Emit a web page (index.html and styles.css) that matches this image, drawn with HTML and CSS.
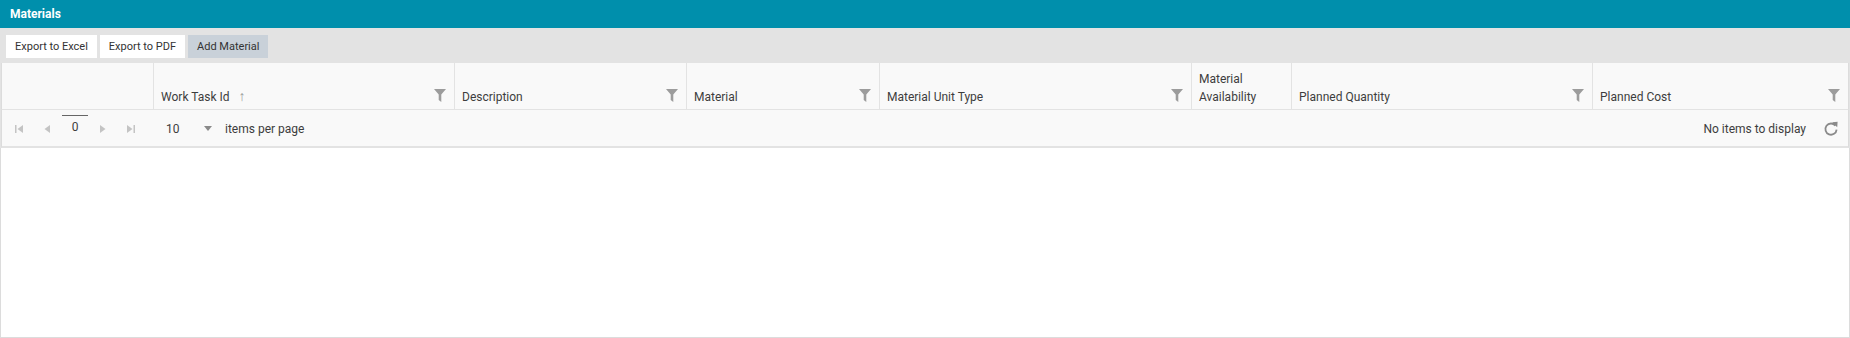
FILE: index.html
```html
<!DOCTYPE html>
<html lang="en">
<head>
  <meta charset="UTF-8">
  <meta name="viewport" content="width=device-width, initial-scale=1.0">
  <title>Materials</title>
  <link rel="stylesheet" href="styles.css">
</head>
<body>
  <div class="panel">
    <div class="panel-title">Materials</div>
    <div class="toolbar">
      <button type="button" class="btn">Export to Excel</button>
      <button type="button" class="btn">Export to PDF</button>
      <button type="button" class="btn btn-primary">Add Material</button>
    </div>
    <div class="grid">
      <div class="grid-header">
        <div class="th"></div>
        <div class="th">
          <span class="th-label">Work Task Id <span class="sort">&#8593;</span></span>
          <svg class="filter" viewBox="0 0 12 13"><path d="M0 0h12L7.3 5.6V13L4.7 11V5.6z"/></svg>
        </div>
        <div class="th">
          <span class="th-label">Description</span>
          <svg class="filter" viewBox="0 0 12 13"><path d="M0 0h12L7.3 5.6V13L4.7 11V5.6z"/></svg>
        </div>
        <div class="th">
          <span class="th-label">Material</span>
          <svg class="filter" viewBox="0 0 12 13"><path d="M0 0h12L7.3 5.6V13L4.7 11V5.6z"/></svg>
        </div>
        <div class="th">
          <span class="th-label">Material Unit Type</span>
          <svg class="filter" viewBox="0 0 12 13"><path d="M0 0h12L7.3 5.6V13L4.7 11V5.6z"/></svg>
        </div>
        <div class="th">
          <span class="th-label">Material Availability</span>
        </div>
        <div class="th">
          <span class="th-label">Planned Quantity</span>
          <svg class="filter" viewBox="0 0 12 13"><path d="M0 0h12L7.3 5.6V13L4.7 11V5.6z"/></svg>
        </div>
        <div class="th">
          <span class="th-label">Planned Cost</span>
          <svg class="filter" viewBox="0 0 12 13"><path d="M0 0h12L7.3 5.6V13L4.7 11V5.6z"/></svg>
        </div>
      </div>
      <div class="pager">
        <div class="pager-nav">
          <span class="pager-slot"><svg class="pager-icon" viewBox="0 0 8 8"><rect x="0" y="0" width="1.5" height="8"/><polygon points="8,0 8,8 2.5,4"/></svg></span>
          <span class="pager-slot"><svg class="pager-icon" viewBox="0 0 8 8"><polygon points="7,0 7,8 1.5,4"/></svg></span>
          <span class="pager-slot"><span class="page-current">0</span></span>
          <span class="pager-slot"><svg class="pager-icon" viewBox="0 0 8 8"><polygon points="1,0 1,8 6.5,4"/></svg></span>
          <span class="pager-slot"><svg class="pager-icon" viewBox="0 0 8 8"><polygon points="0,0 0,8 5.5,4"/><rect x="6.5" y="0" width="1.5" height="8"/></svg></span>
        </div>
        <div class="page-size">
          <span class="page-size-value">10</span>
          <svg class="caret" viewBox="0 0 8 5"><polygon points="0,0 8,0 4,5"/></svg>
          <span>items per page</span>
        </div>
        <div class="pager-info">No items to display</div>
        <svg class="refresh" viewBox="0 0 16 16"><path d="M12.4 4.6A5.6 5.6 0 1 0 13.6 8.6" fill="none" stroke="#8a8a8a" stroke-width="1.8"/><polygon points="9.2,1.2 14.6,0.8 14.2,6.2" fill="#8a8a8a"/></svg>
      </div>
      <div class="grid-content"></div>
    </div>
  </div>
</body>
</html>
```

FILE: styles.css
```css
body {
  margin: 0;
  padding: 0;
  font-family: Roboto, "Liberation Sans", sans-serif;
  font-size: 12px;
  color: #3d3d3d;
  background-color: white;
}
.panel {
  display: flex;
  flex-direction: column;
  height: 338px;
}
.panel-title {
  height: 28px;
  line-height: 28px;
  padding: 0 10px;
  background-color: #008fac;
  color: white;
  font-weight: bold;
}
.toolbar {
  display: flex;
  gap: 3px;
  padding: 7px 6px 5px;
  background-color: #e3e3e3;
}
.btn {
  height: 23px;
  padding: 0 9px;
  border: none;
  border-radius: 0;
  background-color: white;
  color: #333;
  font-family: inherit;
  font-size: 11px;
  cursor: pointer;
}
.btn-primary {
  background-color: #c9d1d9;
}
.grid {
  display: flex;
  flex-direction: column;
  flex: 1;
  background-color: #e3e3e3;
  padding: 0 1px;
}
.grid-header {
  display: grid;
  grid-template-columns: 151px 301px 232px 193px 312px 100px 301px 1fr;
  height: 46px;
  background-color: #f9f9f9;
  border-bottom: 1px solid #e3e3e3;
  border-left: 1px solid #dcdcdc;
  border-right: 1px solid #dcdcdc;
}
.th {
  display: flex;
  align-items: flex-end;
  justify-content: space-between;
  padding: 0 8px 3px 7px;
  line-height: 18px;
}
.th + .th {
  border-left: 1px solid #e3e3e3;
}
.th-label {
  flex: 1;
}
.sort {
  color: #9a9a9a;
  margin-left: 6px;
  font-size: 14px;
}
.filter {
  width: 12px;
  height: 13px;
  fill: #9c9c9c;
  margin-bottom: 4px;
  margin-left: 6px;
}
.pager {
  display: flex;
  align-items: center;
  height: 35px;
  padding-top: 1px;
  background-color: #f9f9f9;
  border-bottom: 2px solid #e3e3e3;
  border-left: 1px solid #dcdcdc;
  border-right: 1px solid #dcdcdc;
  padding-left: 3px;
  padding-right: 9px;
}
.pager-nav {
  display: flex;
  align-items: center;
}
.pager-slot {
  display: flex;
  justify-content: center;
  align-items: center;
  width: 28px;
}
.pager-icon {
  width: 8px;
  height: 8px;
  fill: #c4c4c4;
}
.page-current {
  width: 26px;
  text-align: center;
  line-height: 18px;
  border-top: 1px solid #666;
  padding-top: 2px;
  margin-top: -6px;
}
.page-size {
  display: flex;
  align-items: center;
  margin-left: 21px;
}
.page-size-value {
  width: 38px;
}
.caret {
  width: 8px;
  height: 5px;
  fill: #8a8a8a;
  margin-right: 13px;
}
.pager-info {
  margin-left: auto;
  margin-right: 17px;
}
.refresh {
  width: 16px;
  height: 16px;
}
.grid-content {
  flex: 1;
  background-color: white;
  border: 1px solid #dcdcdc;
  border-top: none;
  margin: 0 -1px;
}
```
